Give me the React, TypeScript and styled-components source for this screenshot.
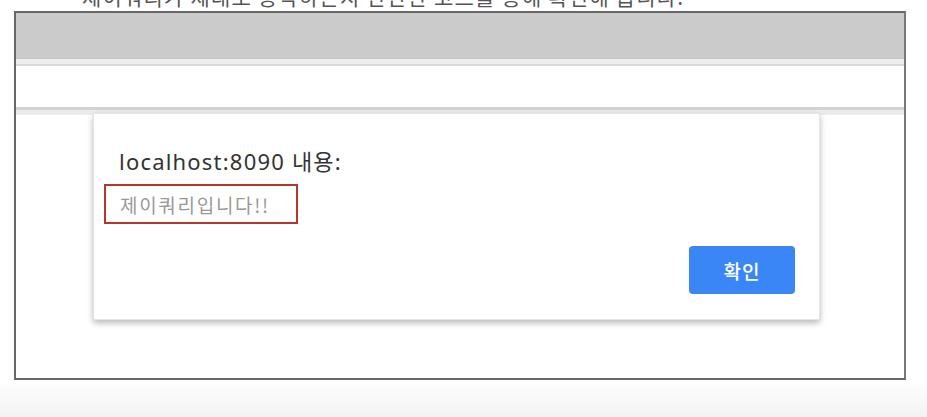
import React from "react";
import styled, { createGlobalStyle } from "styled-components";

const Global = createGlobalStyle`
  html, body { margin: 0; padding: 0; background: #ffffff; }
  body { font-family: "Noto Sans", "Noto Sans CJK KR", sans-serif; }
`;

const Page = styled.div`
  width: 927px;
  height: 417px;
  position: relative;
  overflow: hidden;
  background: linear-gradient(to bottom, #ffffff 0px, #ffffff 381px, #f2f2f2 417px);
`;

const Caption = styled.div`
  height: 11px;
  overflow: hidden;
  display: flex;
  align-items: flex-end;
`;

const CaptionText = styled.div`
  font-family: "Noto Sans CJK KR", sans-serif;
  font-size: 21px;
  line-height: 24px;
  letter-spacing: 1.2px;
  color: #555;
  white-space: nowrap;
  margin-left: 82px;
  margin-bottom: 3px;
  height: 24px;
  flex-shrink: 0;
`;

const Frame = styled.div`
  margin-left: 14px;
  width: 888px;
  height: 365px;
  border: 2px solid #686868;
  border-right-color: #777;
  position: relative;
  display: flex;
  flex-direction: column;
  background: #fff;
`;

const TitleBar = styled.div`
  height: 45px;
  background: #cbcbcb;
  border-bottom: 1px solid #c4c4c4;
`;

const Strip = styled.div`
  height: 5px;
  background: #eeeeee;
  border-bottom: 2px solid #d9d9d9;
`;

const AddressArea = styled.div`
  height: 41px;
  background: #ffffff;
`;

const Band = styled.div`
  height: 3px;
  background: #d2d2d2;
  & + & {
    height: 5px;
    background: #ececec;
  }
`;

const Dialog = styled.div`
  position: absolute;
  left: 77px;
  top: 100px;
  width: 727px;
  height: 207px;
  box-sizing: border-box;
  background: #ffffff;
  border: 1px solid #e4e4e4;
  border-radius: 2px;
  box-shadow: 0 3px 6px rgba(0, 0, 0, 0.28);
  padding: 32px 24px 25px 10px;
  display: flex;
  flex-direction: column;
`;

const Title = styled.div`
  font-family: "Noto Sans", "Noto Sans CJK KR", sans-serif;
  font-size: 22px;
  line-height: 30px;
  letter-spacing: 1.2px;
  color: #333333;
  margin-left: 15px;
`;

const MessageBox = styled.div`
  margin-top: 8px;
  width: 194px;
  height: 40px;
  box-sizing: border-box;
  border: 2px solid #b8352f;
  display: flex;
  align-items: center;
  padding-left: 14px;
  font-family: "Noto Sans CJK KR", sans-serif;
  font-size: 19px;
  letter-spacing: 1.7px;
  color: #999999;
`;

const Actions = styled.div`
  margin-top: auto;
  display: flex;
  justify-content: flex-end;
`;

const OkButton = styled.button`
  width: 106px;
  height: 48px;
  border: none;
  border-radius: 4px;
  background: #3b86f7;
  color: #ffffff;
  font-family: "Noto Sans CJK KR", sans-serif;
  font-size: 19px;
  font-weight: 500;
  letter-spacing: 1px;
  cursor: pointer;
`;

export default function App() {
  return (
    <Page>
      <Global />
      <Caption>
        <CaptionText>제이쿼리가 제대로 동작하는지 간단한 코드를 통해 확인해 봅니다.</CaptionText>
      </Caption>
      <Frame>
        <TitleBar />
        <Strip />
        <AddressArea />
        <Band />
        <Band />
        <Dialog>
          <Title>localhost:8090 내용:</Title>
          <MessageBox>제이쿼리입니다!!</MessageBox>
          <Actions>
            <OkButton>확인</OkButton>
          </Actions>
        </Dialog>
      </Frame>
    </Page>
  );
}
